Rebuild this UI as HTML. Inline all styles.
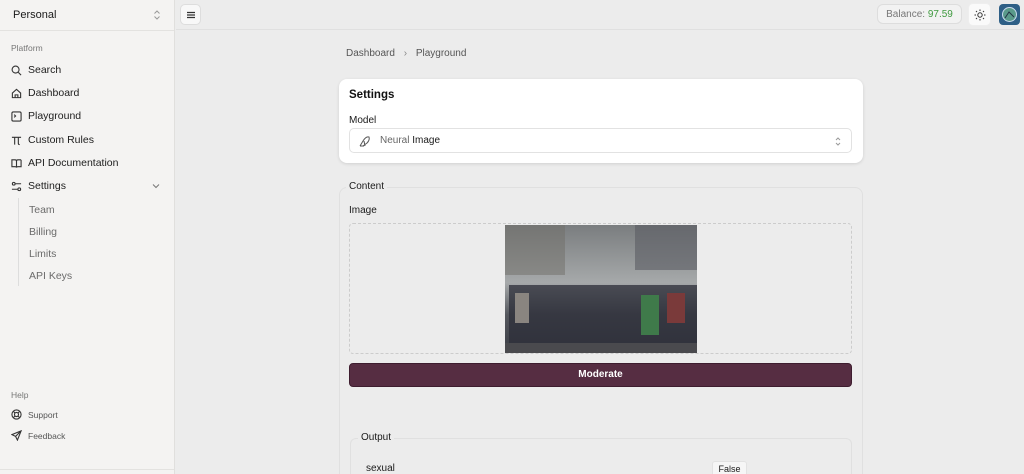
<!DOCTYPE html>
<html style="width:1024px;height:474px;overflow:hidden"><head><meta charset="utf-8"><style>
*{box-sizing:border-box;margin:0;padding:0}
body{width:1024px;height:474px;overflow:hidden;font-family:"Liberation Sans",sans-serif;background:#ececec;color:#1a1a1a;position:relative}
.sb{position:absolute;left:0;top:0;width:175px;height:474px;background:#f4f3f2;border-right:1px solid #e0dfdd}
.sb .hd{height:31px;border-bottom:1px solid #e3e2e0;display:flex;align-items:center;padding:0 13px;font-size:11px;justify-content:space-between}
.lbl{position:absolute;left:11px;font-size:8.5px;color:#777}
.it{position:absolute;left:11px;font-size:10.5px;display:flex;align-items:center;gap:6px;color:#1d1d1d}
.it svg{width:11px;height:11px;stroke:#333;fill:none;stroke-width:1.2}
.sub{position:absolute;left:29px;font-size:10.5px;color:#6b6b6b}
.tb{position:absolute;left:176px;right:0;top:0;height:30px;border-bottom:1px solid #e0e0e0}
.btn{position:absolute;background:#f8f8f8;border:1px solid #ddd;border-radius:5px}
.card{position:absolute;left:339px;width:524px;background:#fff;border-radius:8px;box-shadow:0 1px 3px rgba(0,0,0,.12)}
</style></head><body>
<div class="sb">
 <div class="hd"><span>Personal</span><svg width="8" height="12" viewBox="0 0 8 12" fill="none" stroke="#999" stroke-width="1"><path d="M1.5 4.5L4 2l2.5 2.5M1.5 7.5L4 10l2.5-2.5"/></svg></div>
 <div class="lbl" style="top:43px">Platform</div>
 <div class="it" style="top:64px"><svg viewBox="0 0 12 12"><circle cx="5" cy="5" r="3.8"/><path d="M8 8l3 3"/></svg>Search</div>
 <div class="it" style="top:87px"><svg viewBox="0 0 12 12"><path d="M1.5 5.5L6 1.5l4.5 4v5h-9z M4.5 10.5v-3h3v3"/></svg>Dashboard</div>
 <div class="it" style="top:110px"><svg viewBox="0 0 12 12"><rect x="1" y="1" width="10" height="10" rx="1.5"/><path d="M3.5 4l1.5 1.5L3.5 7"/></svg>Playground</div>
 <div class="it" style="top:134px"><svg viewBox="0 0 12 12"><path d="M1 2.5h10M4 2.5v8M8 2.5v6.5q0 1.5 1.5 1.5"/></svg>Custom Rules</div>
 <div class="it" style="top:157px"><svg viewBox="0 0 12 12"><path d="M1 2h3.5Q6 2 6 3.5V10.5Q6 9.5 4.5 9.5H1zM11 2H7.5Q6 2 6 3.5M11 2v7.5H7.5Q6 9.5 6 10.5"/></svg>API Documentation</div>
 <div class="it" style="top:180px"><svg viewBox="0 0 12 12"><circle cx="3" cy="3" r="1.5"/><path d="M5 3h6M1 9h6"/><circle cx="9" cy="9" r="1.5"/></svg>Settings</div>
 <svg style="position:absolute;left:152px;top:183px" width="8" height="6" viewBox="0 0 8 6" fill="none" stroke="#777"><path d="M1 1.5l3 3 3-3"/></svg>
 <div style="position:absolute;left:18px;top:198px;width:1px;height:88px;background:#ddd"></div>
 <div class="sub" style="top:204px">Team</div>
 <div class="sub" style="top:226px">Billing</div>
 <div class="sub" style="top:248px">Limits</div>
 <div class="sub" style="top:270px">API Keys</div>
 <div class="lbl" style="top:390px">Help</div>
 <div class="it" style="top:409px;font-size:8.5px;color:#555"><svg viewBox="0 0 12 12"><circle cx="6" cy="6" r="5"/><circle cx="6" cy="6" r="2.2"/><path d="M2.5 2.5l2 2M9.5 2.5l-2 2M2.5 9.5l2-2M9.5 9.5l-2-2"/></svg>Support</div>
 <div class="it" style="top:430px;font-size:8.5px;color:#555"><svg viewBox="0 0 12 12"><path d="M11 1L1 5l4 2 2 4zM11 1L5 7"/></svg>Feedback</div>
 <div style="position:absolute;left:0;right:0;top:469px;border-top:1px solid #e3e2e0"></div>
</div>
<div class="tb"></div>
<div class="btn" style="left:180px;top:4px;width:21px;height:21px"><svg style="position:absolute;left:5px;top:5px" width="10" height="10" viewBox="0 0 10 10" stroke="#333" stroke-width="1.2"><path d="M1 2.5h8M1 5h8M1 7.5h8"/></svg></div>
<div class="btn" style="left:877px;top:4px;width:85px;height:20px;border-radius:6px;font-size:10px;color:#777;display:flex;align-items:center;justify-content:center;background:#f2f2f2">Balance:&nbsp;<span style="color:#3f9a3f">97.59</span></div>
<div class="btn" style="left:968px;top:3px;width:23px;height:23px;background:#fafafa;border-color:#eee"><svg style="position:absolute;left:5px;top:5px" width="12" height="12" viewBox="0 0 12 12" stroke="#333" fill="none" stroke-width="1"><circle cx="6" cy="6" r="2.2"/><path d="M6 .5v1.5M6 10v1.5M.5 6H2M10 6h1.5M2 2l1 1M9 9l1 1M2 10l1-1M9 3l1-1"/></svg></div>
<div style="position:absolute;left:999px;top:4px;width:21px;height:21px;border-radius:4px;background:#2e5f86;overflow:hidden"><svg width="21" height="21" viewBox="0 0 21 21"><circle cx="10.5" cy="10.5" r="7" fill="#5a9a8a" stroke="#cde" stroke-width="1"/><path d="M6 14l4-6 5 5" stroke="#234" fill="none"/></svg></div>
<div style="position:absolute;left:346px;top:48px;font-size:10px;color:#555">Dashboard <span style="margin:0 6px;color:#888">›</span> Playground</div>
<div class="card" style="top:79px;height:84px">
 <div style="position:absolute;left:10px;top:10px;font-size:11.5px;font-weight:bold;color:#111">Settings</div>
 <div style="position:absolute;left:10px;top:36px;font-size:10px">Model</div>
 <div style="position:absolute;left:10px;top:49px;width:503px;height:25px;border:1px solid #e2e2e2;border-radius:5px;font-size:10px;line-height:23px;padding-left:30px"><svg style="position:absolute;left:9px;top:6px" width="12" height="12" viewBox="0 0 12 12" fill="none" stroke="#555" stroke-width="1"><path d="M1 11l3-5Q7 1 10 2q1 3-2 6L4 11M1 11h4M5 6l1 5"/></svg><span style="color:#666">Neural</span> Image<svg style="position:absolute;right:10px;top:8px" width="6" height="9" viewBox="0 0 6 9" fill="none" stroke="#999"><path d="M1 3l2-2 2 2M1 6l2 2 2-2"/></svg></div>
</div>
<div style="position:absolute;left:339px;top:187px;width:524px;height:287px;border:1px solid #e0e0e0;border-bottom:none;border-radius:8px 8px 0 0"></div>
<div style="position:absolute;left:346px;top:181px;font-size:10px;background:#ececec;padding:0 3px">Content</div>
<div style="position:absolute;left:349px;top:205px;font-size:10px">Image</div>
<div style="position:absolute;left:349px;top:223px;width:503px;height:131px;border:1px dashed #ccc;border-radius:4px"></div>
<svg style="position:absolute;left:505px;top:225px" width="192" height="128" viewBox="0 0 192 128">
<defs><linearGradient id="g" x1="0" y1="0" x2="0" y2="1"><stop offset="0" stop-color="#7a7d7f"/><stop offset=".45" stop-color="#a6a9aa"/><stop offset=".7" stop-color="#55585e"/><stop offset="1" stop-color="#3a3c44"/></linearGradient></defs>
<rect width="192" height="128" fill="url(#g)"/>
<rect x="0" y="0" width="60" height="50" fill="#6f6e68" opacity=".5"/>
<rect x="130" y="0" width="62" height="45" fill="#5a5c62" opacity=".6"/>
<rect x="4" y="60" width="190" height="60" fill="#2c2e38" opacity=".75"/>
<rect x="136" y="70" width="18" height="40" fill="#3f7a4a"/>
<rect x="162" y="68" width="18" height="30" fill="#7a3a3a"/>
<rect x="10" y="68" width="14" height="30" fill="#8a8580"/>
<rect x="0" y="118" width="192" height="10" fill="#4a4a4e"/>
</svg>
<div style="position:absolute;left:349px;top:363px;width:503px;height:24px;background:#562d42;border-radius:4px;color:#fff;font-weight:bold;font-size:10px;text-align:center;line-height:22px;border:1px solid #3e1d2f">Moderate</div>
<div style="position:absolute;left:350px;top:438px;width:502px;height:36px;border:1px solid #e0e0e0;border-bottom:none;border-radius:6px 6px 0 0"></div>
<div style="position:absolute;left:358px;top:432px;font-size:10px;background:#ececec;padding:0 3px">Output</div>
<div style="position:absolute;left:366px;top:463px;font-size:10px">sexual</div>
<div style="position:absolute;left:712px;top:461px;width:35px;height:13px;background:#f6f6f6;border:1px solid #e2e2e2;border-bottom:none;border-radius:3px 3px 0 0;font-size:9px;text-align:center;line-height:14px;overflow:hidden">False</div>
</body></html>
